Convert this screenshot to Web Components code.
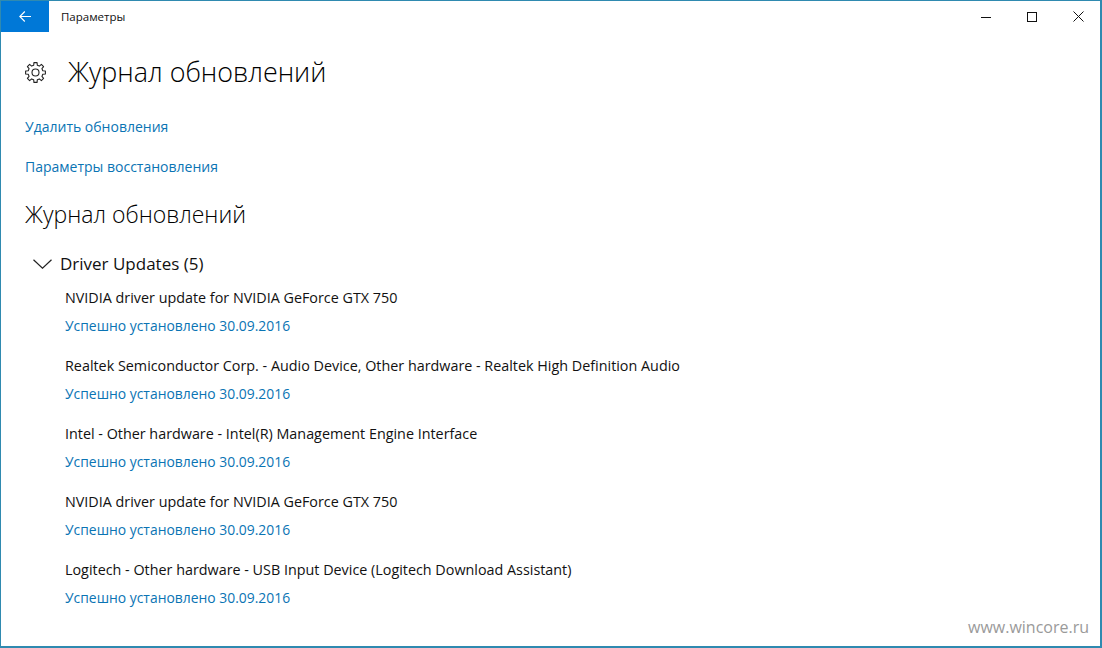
<!DOCTYPE html>
<html lang="ru">
<head>
<meta charset="utf-8">
<title>Параметры</title>
<style>
  html, body { margin: 0; padding: 0; background: #fff; }
  body { font-family: "Open Sans", "Noto Sans", sans-serif; width: 1102px; height: 648px; overflow: hidden; }
</style>
</head>
<body>
<settings-window>
  <title-bar slot="bar" caption="Параметры"></title-bar>
  <page-header>Журнал обновлений</page-header>
  <link-row>Удалить обновления</link-row>
  <link-row>Параметры восстановления</link-row>
  <section-title>Журнал обновлений</section-title>
  <update-group label="Driver Updates (5)">
    <update-item name="NVIDIA driver update for NVIDIA GeForce GTX 750" status="Успешно установлено 30.09.2016"></update-item>
    <update-item name="Realtek Semiconductor Corp. - Audio Device, Other hardware - Realtek High Definition Audio" status="Успешно установлено 30.09.2016"></update-item>
    <update-item name="Intel - Other hardware - Intel(R) Management Engine Interface" status="Успешно установлено 30.09.2016"></update-item>
    <update-item name="NVIDIA driver update for NVIDIA GeForce GTX 750" status="Успешно установлено 30.09.2016"></update-item>
    <update-item name="Logitech - Other hardware - USB Input Device (Logitech Download Assistant)" status="Успешно установлено 30.09.2016"></update-item>
  </update-group>
</settings-window>

<script>
// outline of an 8 tooth gear, centre 10.5,10.5
function gearPath() {
    const point = (r, deg) => {
        const a = (deg * Math.PI) / 180;
        return `${(10.5 + r * Math.cos(a)).toFixed(2)} ${(10.5 + r * Math.sin(a)).toFixed(2)}`;
    };
    const parts = [];
    for (let i = 0; i < 8; i++) {
        const c = i * 45 - 90;
        parts.push(point(7.5, c - 14), point(10, c - 9), point(10, c + 9), point(7.5, c + 14));
    }
    return 'M' + parts.join('L') + 'Z';
}

class SettingsWindow extends HTMLElement {
    constructor() {
        super();
        this.attachShadow({ mode: 'open' });
        this.shadowRoot.innerHTML = `
      <style>
        :host {
          display: flex;
          flex-direction: column;
          position: relative;
          box-sizing: border-box;
          width: 1102px;
          height: 648px;
          border: 1px solid #2f8ab0;
          box-shadow: inset -1px -1px 0 #2f8ab0;
          background: #fff;
          overflow: hidden;
        }
        .content { display: flex; flex-direction: column; padding: 0 0 0 24px; }
        .mark {
          position: absolute;
          right: 12px;
          bottom: 9px;
          font-size: 16px;
          color: #9a9a9a;
        }
      </style>
      <slot name="bar"></slot>
      <div class="content"><slot></slot></div>
      <div class="mark">www.wincore.ru</div>
    `;
    }
}

class TitleBar extends HTMLElement {
    constructor() {
        super();
        this.attachShadow({ mode: 'open' });
        this.shadowRoot.innerHTML = `
      <style>
        :host { display: flex; align-items: stretch; height: 31px; flex: none; }
        .back { width: 48px; background: #0078d7; display: flex; align-items: center; justify-content: center; }
        .caption { margin-left: 12px; font-size: 11.5px; line-height: 31px; color: #111; }
        .spacer { flex: 1; }
        .btn { width: 46px; display: flex; align-items: center; justify-content: center; }
        svg { display: block; }
      </style>
      <div class="back">
        <svg width="12" height="11" viewBox="0 0 12 11" fill="none" stroke="#fff" stroke-width="1.1">
          <path d="M0.8 5.5H12M5.8 0.5L0.8 5.5L5.8 10.5"/>
        </svg>
      </div>
      <div class="caption">${this.getAttribute('caption')}</div>
      <div class="spacer"></div>
      <div class="btn"><svg width="10" height="10" viewBox="0 0 10 10" stroke="#111" fill="none"><path d="M0 5.5H10"/></svg></div>
      <div class="btn"><svg width="10" height="10" viewBox="0 0 10 10" stroke="#111" fill="none"><rect x="0.5" y="0.5" width="9" height="9"/></svg></div>
      <div class="btn"><svg width="11" height="11" viewBox="0 0 11 11" stroke="#111" fill="none"><path d="M0.5 0.5L10.5 10.5M10.5 0.5L0.5 10.5"/></svg></div>
    `;
    }
}

class PageHeader extends HTMLElement {
    constructor() {
        super();
        this.attachShadow({ mode: 'open' });
        this.shadowRoot.innerHTML = `
      <style>
        :host { display: flex; align-items: center; height: 38px; margin: 21px 0 16px; }
        svg { display: block; width: 21px; height: 21px; flex: none; margin-left: 0; }
        h1 { margin: 0 0 0 22px; font-size: 26.9px; font-weight: 300; line-height: 38px; color: #000; }
      </style>
      <svg viewBox="0 0 21 21" fill="none" stroke="#222" stroke-width="1.1" stroke-linejoin="round">
        <path d="${gearPath()}"/>
        <circle cx="10.5" cy="10.5" r="3.5"/>
      </svg>
      <h1><slot></slot></h1>
    `;
    }
}

class LinkRow extends HTMLElement {
    constructor() {
        super();
        this.attachShadow({ mode: 'open' });
        this.shadowRoot.innerHTML = `
      <style>
        :host { display: block; height: 40px; font-size: 14px; line-height: 40px; color: #0a74b4; }
      </style>
      <slot></slot>
    `;
    }
}

class SectionTitle extends HTMLElement {
    constructor() {
        super();
        this.attachShadow({ mode: 'open' });
        this.shadowRoot.innerHTML = `
      <style>
        :host { display: block; font-size: 23px; font-weight: 300; line-height: 32px; color: #000; margin-top: 11px; }
      </style>
      <slot></slot>
    `;
    }
}

class UpdateGroup extends HTMLElement {
    constructor() {
        super();
        this.attachShadow({ mode: 'open' });
        this.shadowRoot.innerHTML = `
      <style>
        :host { display: block; margin-top: 16px; }
        .head { display: flex; align-items: center; height: 34px; font-size: 17px; color: #111; }
        svg { display: block; margin: 1px 8px 0; }
        .items { padding: 4px 0 0 40px; display: flex; flex-direction: column; }
      </style>
      <div class="head">
        <svg width="19" height="10" viewBox="0 0 19 10" fill="none" stroke="#222" stroke-width="1.2"><path d="M0.5 0.8L9.5 9.2L18.5 0.8"/></svg>
        <span>${this.getAttribute('label')}</span>
      </div>
      <div class="items"><slot></slot></div>
    `;
    }
}

class UpdateItem extends HTMLElement {
    constructor() {
        super();
        this.attachShadow({ mode: 'open' });
        this.shadowRoot.innerHTML = `
      <style>
        :host { display: block; height: 68px; }
        .name { font-size: 14.35px; line-height: 28px; height: 28px; color: #111; }
        .status { font-size: 13.9px; line-height: 28px; height: 28px; color: #0a74b4; }
      </style>
      <div class="name">${this.getAttribute('name')}</div>
      <div class="status">${this.getAttribute('status')}</div>
    `;
    }
}

customElements.define('settings-window', SettingsWindow);
customElements.define('title-bar', TitleBar);
customElements.define('page-header', PageHeader);
customElements.define('link-row', LinkRow);
customElements.define('section-title', SectionTitle);
customElements.define('update-group', UpdateGroup);
customElements.define('update-item', UpdateItem);
</script>
</body>
</html>
